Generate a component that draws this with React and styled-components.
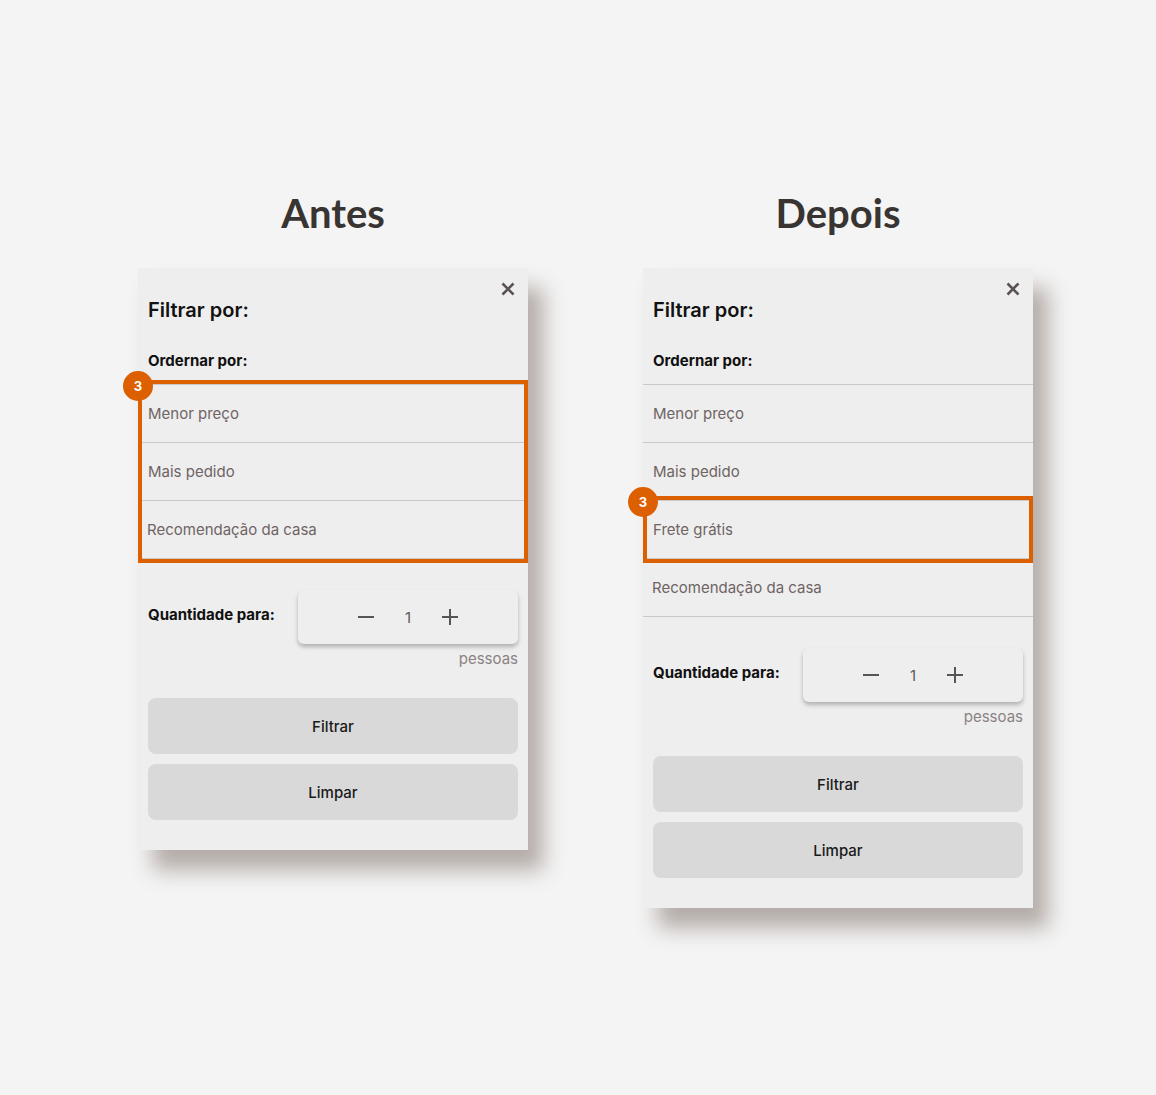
import React from "react";
import styled, { createGlobalStyle } from "styled-components";

const GlobalStyle = createGlobalStyle`
  html, body {
    margin: 0;
    padding: 0;
    background: #f4f4f4;
  }
  body {
    font-family: Inter, "Noto Sans", sans-serif;
  }
`;

const Page = styled.div`
  display: flex;
  align-items: flex-start;
  gap: 115px;
  padding: 189px 0 0 138px;
  min-height: 1095px;
  box-sizing: border-box;
`;

const Column = styled.div`
  display: flex;
  flex-direction: column;
  width: 390px;
`;

const Heading = styled.h1`
  margin: 0 0 31px;
  font-family: Lato, sans-serif;
  font-weight: 700;
  font-size: 40px;
  line-height: 48px;
  color: #383432;
  text-align: center;
`;

const Panel = styled.div`
  display: flex;
  flex-direction: column;
  background: #eeeeee;
  padding-bottom: 30px;
  box-shadow: 15px 20px 20px rgba(85, 65, 55, 0.4);
`;

const CloseRow = styled.div`
  display: flex;
  justify-content: flex-end;
  padding: 14px 13px 0;
  height: 14px;
`;

const CloseButton = styled.button`
  border: none;
  background: none;
  padding: 0;
  width: 14px;
  height: 14px;
  display: flex;
  cursor: pointer;
`;

const Title = styled.h2`
  margin: 2px 0 0;
  padding: 0 10px;
  font-size: 20px;
  line-height: 24px;
  font-weight: 600;
  color: #121212;
`;

const Label = styled.div`
  font-size: 15px;
  line-height: 18px;
  font-weight: 700;
  color: #111;
`;

const SubHeading = styled(Label)`
  margin: 30px 0 14px;
  padding: 0 10px;
`;

const List = styled.div`
  display: flex;
  flex-direction: column;
  border-top: 1px solid #c9c9c9;
`;

const Row = styled.div`
  height: 57px;
  display: flex;
  align-items: center;
  padding-left: ${(p) => (p.$tight ? 9 : 10)}px;
  border-bottom: 1px solid #c9c9c9;
  font-size: 15px;
  color: #6e6464;
`;

const Highlight = styled.div`
  position: relative;
  display: flex;
  flex-direction: column;

  &::after {
    content: "";
    position: absolute;
    top: -5px;
    bottom: -4px;
    left: 0;
    right: 0;
    border: 4.5px solid #dc5f00;
    pointer-events: none;
  }
`;

const Badge = styled.span`
  position: absolute;
  z-index: 2;
  left: -15px;
  top: -14px;
  width: 30px;
  height: 30px;
  border-radius: 50%;
  background: #dc5f00;
  color: #fff;
  font-size: 13px;
  font-weight: 700;
  display: flex;
  align-items: center;
  justify-content: center;
`;

const QtyRow = styled.div`
  display: flex;
  justify-content: space-between;
  align-items: flex-start;
  padding: 0 10px;
  margin-top: 31px;
`;

const QtyLabel = styled(Label)`
  padding-top: 16px;
`;

const StepperWrap = styled.div`
  display: flex;
  flex-direction: column;
  align-items: flex-end;
`;

const Stepper = styled.div`
  width: 220px;
  height: 54px;
  border-radius: 6px;
  background: #eeeeee;
  box-shadow: 0 3px 4px rgba(0, 0, 0, 0.25);
  display: flex;
  align-items: center;
  justify-content: center;
  gap: 30px;
`;

const StepButton = styled.button`
  border: none;
  background: none;
  padding: 0;
  display: flex;
  cursor: pointer;
`;

const Count = styled.span`
  font-size: 15px;
  color: #5f5858;
`;

const Unit = styled.span`
  margin-top: 6px;
  font-size: 15px;
  line-height: 18px;
  color: #8a8282;
`;

const Actions = styled.div`
  display: flex;
  flex-direction: column;
  gap: 10px;
  padding: 0 10px;
  margin-top: 30px;
`;

const ActionButton = styled.button`
  height: 56px;
  border: none;
  border-radius: 8px;
  background: #d9d9d9;
  font-family: Inter, sans-serif;
  font-size: 15px;
  font-weight: 500;
  color: #1a1a1a;
  cursor: pointer;
`;

const CloseIcon = () => (
  <svg width="14" height="14" viewBox="0 0 14 14">
    <path d="M1.5 1.5 L12.5 12.5 M12.5 1.5 L1.5 12.5" stroke="#5b5353" strokeWidth="2.6" strokeLinecap="butt" />
  </svg>
);

const MinusIcon = () => (
  <svg width="18" height="18" viewBox="0 0 18 18">
    <path d="M1 9 H17" stroke="#555" strokeWidth="2" />
  </svg>
);

const PlusIcon = () => (
  <svg width="18" height="18" viewBox="0 0 18 18">
    <path d="M1 9 H17 M9 1 V17" stroke="#555" strokeWidth="2" />
  </svg>
);

function FilterPanel({ before }) {
  return (
    <Panel>
      <CloseRow>
        <CloseButton aria-label="Fechar">
          <CloseIcon />
        </CloseButton>
      </CloseRow>
      <Title>Filtrar por:</Title>
      <SubHeading>Ordernar por:</SubHeading>
      {before ? (
        <List>
          <Highlight>
            <Badge>3</Badge>
            <Row>Menor preço</Row>
            <Row>Mais pedido</Row>
            <Row $tight>Recomendação da casa</Row>
          </Highlight>
        </List>
      ) : (
        <List>
          <Row>Menor preço</Row>
          <Row>Mais pedido</Row>
          <Highlight>
            <Badge>3</Badge>
            <Row>Frete grátis</Row>
          </Highlight>
          <Row $tight>Recomendação da casa</Row>
        </List>
      )}
      <QtyRow>
        <QtyLabel>Quantidade para:</QtyLabel>
        <StepperWrap>
          <Stepper>
            <StepButton aria-label="Diminuir">
              <MinusIcon />
            </StepButton>
            <Count>1</Count>
            <StepButton aria-label="Aumentar">
              <PlusIcon />
            </StepButton>
          </Stepper>
          <Unit>pessoas</Unit>
        </StepperWrap>
      </QtyRow>
      <Actions>
        <ActionButton>Filtrar</ActionButton>
        <ActionButton>Limpar</ActionButton>
      </Actions>
    </Panel>
  );
}

export default function App() {
  return (
    <>
      <GlobalStyle />
      <Page>
        <Column>
          <Heading>Antes</Heading>
          <FilterPanel before />
        </Column>
        <Column>
          <Heading>Depois</Heading>
          <FilterPanel />
        </Column>
      </Page>
    </>
  );
}
